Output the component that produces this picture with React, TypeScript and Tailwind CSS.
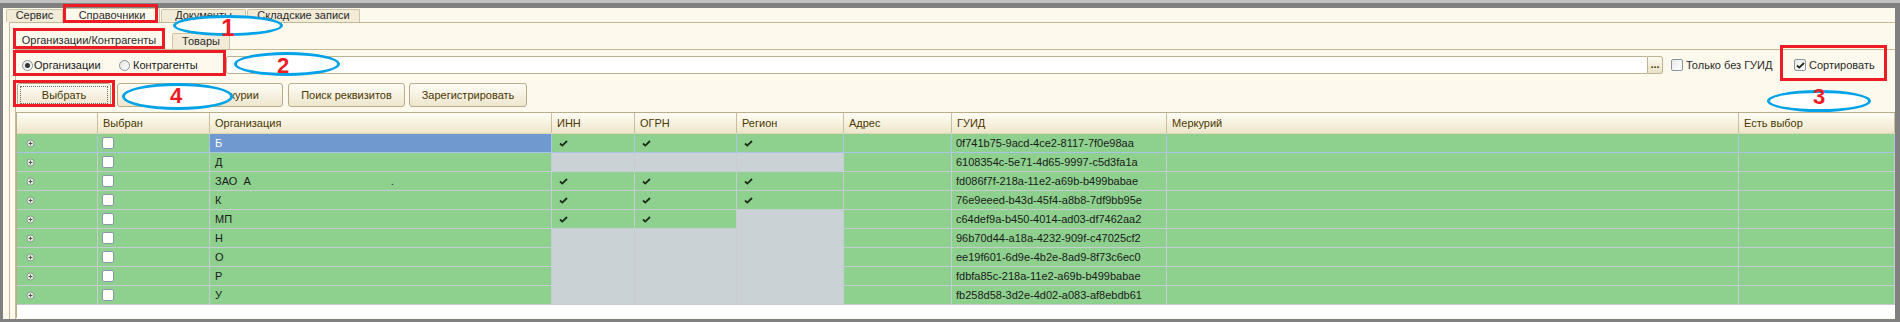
import React from "react";

type Row = {
  org: string;
  guid: string;
  checks: number[];
  gray: number[];
  dot?: boolean;
};

const rows: Row[] = [
  { org: "Б", guid: "0f741b75-9acd-4ce2-8117-7f0e98aa", checks: [3, 4, 5], gray: [] },
  { org: "Д", guid: "6108354c-5e71-4d65-9997-c5d3fa1a", checks: [], gray: [3, 4, 5] },
  { org: "ЗАО  А", guid: "fd086f7f-218a-11e2-a69b-b499babae", checks: [3, 4, 5], gray: [], dot: true },
  { org: "К", guid: "76e9eeed-b43d-45f4-a8b8-7df9bb95e", checks: [3, 4, 5], gray: [] },
  { org: "МП", guid: "c64def9a-b450-4014-ad03-df7462aa2", checks: [3, 4], gray: [5] },
  { org: "Н", guid: "96b70d44-a18a-4232-909f-c47025cf2", checks: [], gray: [3, 4, 5] },
  { org: "О", guid: "ee19f601-6d9e-4b2e-8ad9-8f73c6ec0", checks: [], gray: [3, 4, 5] },
  { org: "Р", guid: "fdbfa85c-218a-11e2-a69b-b499babae", checks: [], gray: [3, 4, 5] },
  { org: "У", guid: "fb258d58-3d2e-4d02-a083-af8ebdb61", checks: [], gray: [3, 4, 5] },
];

const headers = ["", "Выбран", "Организация", "ИНН", "ОГРН", "Регион", "Адрес", "ГУИД", "Меркурий", "Есть выбор"];

const gridCols = "grid grid-cols-[81px_112px_342px_83px_102px_107px_108px_215px_572px_1fr]";

function Check() {
  return (
    <svg width="9" height="7" viewBox="0 0 9 7">
      <path d="M1 3.5 L3.3 5.6 L8 1" stroke="#1b2a1b" strokeWidth="1.8" fill="none" />
    </svg>
  );
}

function Expand() {
  return (
    <svg width="9" height="9" viewBox="0 0 9 9">
      <circle cx="4.5" cy="4.5" r="3.6" fill="#e4efe4" stroke="#8b998b" strokeWidth="1" />
      <path d="M2.6 4.5 H6.4 M4.5 2.6 V6.4" stroke="#4d574d" strokeWidth="1" />
    </svg>
  );
}

function Box(props: { checked?: boolean }) {
  return (
    <div className="flex h-[12px] w-[12px] items-center justify-center rounded-[2px] border border-[#8795a3] bg-linear-to-br from-[#e9e9e6] to-white">
      {props.checked && <Check />}
    </div>
  );
}

function Radio(props: { checked?: boolean }) {
  return (
    <div className="flex h-[11px] w-[11px] items-center justify-center rounded-full border border-[#8593a0] bg-linear-to-br from-[#e3e3e0] to-white">
      {props.checked && <div className="h-[5px] w-[5px] rounded-full bg-[#333]" />}
    </div>
  );
}

function Tab(props: { label: string; w: string; active?: boolean }) {
  return (
    <div
      className={
        props.active
          ? `${props.w} flex h-[14px] items-center justify-center rounded-t-[2px] border border-b-0 border-[#cdc4a4] bg-[#fdf9ec] pb-[1px] text-[#2a2a2a]`
          : `${props.w} ml-[1px] flex h-[13px] items-center justify-center rounded-t-[2px] border border-b-0 border-[#cdc4a4] bg-[#f1ebd7] pb-[1px] text-[#2a2a2a]`
      }
    >
      {props.label}
    </div>
  );
}

function Button(props: { label: string; w: string; focus?: boolean }) {
  return (
    <div className={`${props.w} flex h-[24px] rounded-[3px] border border-[#b7ad8a] bg-linear-to-b from-[#fefcf6] to-[#eee6cd] p-[2px] text-[#4a3700]`}>
      <div
        className={
          props.focus
            ? "flex flex-1 items-center justify-center border border-dotted border-[#6d6d6d]"
            : "flex flex-1 items-center justify-center"
        }
      >
        {props.label}
      </div>
    </div>
  );
}

function cellClass(r: number, c: number) {
  const row = rows[r];
  const isGray = row.gray.includes(c);
  const grayBelow = r + 1 < rows.length && rows[r + 1].gray.includes(c) && isGray;
  const bg = r === 0 && c === 2 ? "bg-[#6f99cf] text-white" : isGray ? "bg-[#cad2d5]" : "bg-[#8ed08e]";
  const line = r === 0 ? "border-[#adc5e4]" : "border-[#c6ccd1]";
  const bottom = grayBelow ? "border-b-[#cad2d5]" : "";
  return `flex h-[19px] items-center border-b border-r ${line} ${bottom} ${bg}`;
}

export default function App() {
  return (
    <div className="relative h-[322px] w-[1900px] overflow-hidden bg-[#808080] font-['Liberation_Sans',Arial,sans-serif] text-[11px] leading-none text-[#1a1a1a]">
      <div className="h-[3px] bg-[#c3c3c3]" />
      <div className="ml-[3px] mr-[5px] mt-[5px] flex h-[311px] flex-col bg-[#fdf9ec]">
        {/* main tabs */}
        <div className="flex h-[14px] items-end pl-[2px]">
          <Tab label="Сервис" w="w-[57px]" />
          <div className="ml-[1px]">
            <Tab label="Справочники" w="w-[96px]" active />
          </div>
          <Tab label="Документы" w="w-[85px]" />
          <Tab label="Складские записи" w="w-[113px]" />
        </div>

        <div className="ml-[6px] flex flex-1 flex-col border-l border-t border-[#c2b894]">
          {/* inner tabs */}
          <div className="flex h-[26px] items-end pl-[5px]">
            <div className="flex h-[19px] w-[148px] items-center justify-center rounded-t-[2px] border border-b-0 border-[#cdc4a4] bg-[#fdf9ec] text-[#2a2a2a]">
              Организации/Контрагенты
            </div>
            <div className="ml-[9px] flex h-[16px] w-[58px] items-center justify-center rounded-t-[2px] border border-b-0 border-[#cdc4a4] bg-[#f1ebd7] text-[#2a2a2a]">
              Товары
            </div>
          </div>

          <div className="ml-[5px] flex flex-1 flex-col border-l border-t border-[#c2b894]">
            {/* filter row */}
            <div className="flex h-[30px] items-center">
              <div className="flex w-[210px] items-center pl-[6px]">
                <div className="flex w-[97px] items-center gap-[1px]">
                  <Radio checked />
                  <span>Организации</span>
                </div>
                <div className="flex items-center gap-[3px]">
                  <Radio />
                  <span>Контрагенты</span>
                </div>
              </div>
              <div className="h-[18px] w-[1422px] rounded-l-[2px] border border-[#bdb393] bg-white" />
              <div className="flex h-[18px] w-[15px] items-end justify-center rounded-r-[3px] border border-l-0 border-[#bdb393] bg-linear-to-b from-[#fdfaf0] to-[#ebe3c7] pb-[3px] font-bold text-[#4a3700]">
                ...
              </div>
              <div className="ml-[8px] flex w-[123px] items-center gap-[3px]">
                <Box />
                <span className="text-[#2a2a2a]">Только без ГУИД</span>
              </div>
              <div className="flex items-center gap-[3px]">
                <Box checked />
                <span className="text-[#2a2a2a]">Сортировать</span>
              </div>
            </div>

            {/* buttons */}
            <div className="mt-[3px] flex pl-[1px]">
              <Button label="Выбрать" w="w-[94px]" focus />
              <div className="ml-[6px]">
                <Button label="Загрузить из Меркурии" w="w-[166px]" />
              </div>
              <div className="ml-[5px]">
                <Button label="Поиск реквизитов" w="w-[117px]" />
              </div>
              <div className="ml-[4px]">
                <Button label="Зарегистрировать" w="w-[118px]" />
              </div>
            </div>

            {/* table */}
            <div className="mb-[1px] mt-[5px] flex flex-1 flex-col border-l border-t border-[#b9ae8a] bg-white">
              <div className={`${gridCols} h-[21px] border-b border-[#e0d7b6] bg-linear-to-b from-[#fefcf5] to-[#efe7cb] text-[#4a3900]`}>
                {headers.map((h, i) => (
                  <div key={i} className="flex items-center border-r border-[#c9bf9b] pl-[5px]">
                    {h}
                  </div>
                ))}
              </div>
              {rows.map((row, r) => (
                <div key={r} className={gridCols}>
                  <div className={`${cellClass(r, 0)} pl-[9px]`}>
                    <Expand />
                  </div>
                  <div className={`${cellClass(r, 1)} pl-[4px]`}>
                    <div className="h-[12px] w-[12px] rounded-[2px] border border-[#8a98a6] bg-white" />
                  </div>
                  <div className={`${cellClass(r, 2)} whitespace-pre pl-[5px]`}>
                    {row.org}
                    {row.dot && <span className="ml-[140px]">.</span>}
                  </div>
                  {[3, 4, 5].map((c) => (
                    <div key={c} className={`${cellClass(r, c)} pl-[7px]`}>
                      {row.checks.includes(c) && <Check />}
                    </div>
                  ))}
                  <div className={cellClass(r, 6)} />
                  <div className={`${cellClass(r, 7)} pl-[4px]`}>{row.guid}</div>
                  <div className={cellClass(r, 8)} />
                  <div className={cellClass(r, 9)} />
                </div>
              ))}
            </div>
          </div>
        </div>
      </div>

      {/* annotations drawn over the screenshot */}
      <div className="absolute left-[63px] top-[4px] h-[19px] w-[95px] border-[3px] border-[#ed1c24]" />
      <div className="absolute left-[13px] top-[28px] h-[21px] w-[152px] border-[3px] border-[#ed1c24]" />
      <div className="absolute left-[13px] top-[50px] h-[26px] w-[213px] border-[3px] border-[#ed1c24]" />
      <div className="absolute left-[13px] top-[80px] h-[27px] w-[102px] border-[3px] border-[#ed1c24]" />
      <div className="absolute left-[1780px] top-[45px] h-[36px] w-[107px] border-[3px] border-[#ed1c24]" />

      <div className="absolute left-[173px] top-[15px] h-[21px] w-[110px] rounded-[50%] border-[3px] border-[#00a2e8] bg-white" />
      <div className="absolute left-[234px] top-[52px] h-[24px] w-[106px] rounded-[50%] border-[3px] border-[#00a2e8] bg-white" />
      <div className="absolute left-[122px] top-[83px] h-[27px] w-[111px] rounded-[50%] border-[3px] border-[#00a2e8] bg-white" />
      <div className="absolute left-[1767px] top-[90px] h-[22px] w-[104px] rounded-[50%] border-[3px] border-[#00a2e8] bg-white" />

      <div className="absolute left-[228px] top-[16px] -translate-x-1/2 text-[24px] font-bold text-[#ed1c24]">1</div>
      <div className="absolute left-[283px] top-[55px] -translate-x-1/2 text-[22px] font-bold text-[#ed1c24]">2</div>
      <div className="absolute left-[176px] top-[85px] -translate-x-1/2 text-[22px] font-bold text-[#ed1c24]">4</div>
      <div className="absolute left-[1819px] top-[86px] -translate-x-1/2 text-[22px] font-bold text-[#ed1c24]">3</div>
    </div>
  );
}
